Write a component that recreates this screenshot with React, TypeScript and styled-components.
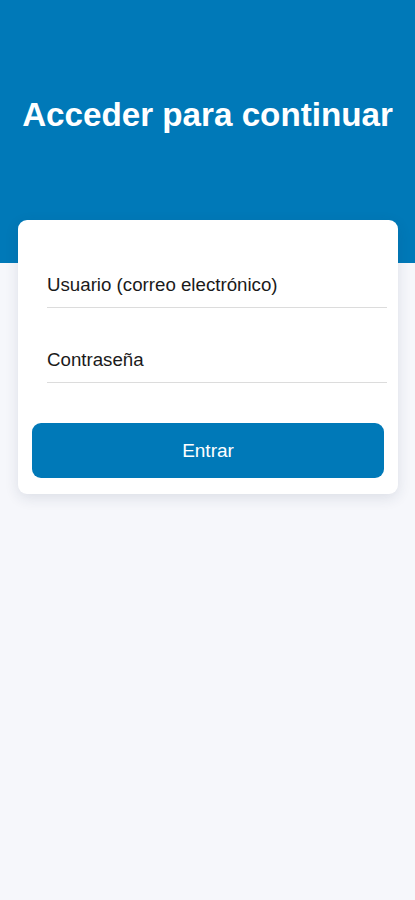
import React from "react";
import styled, { createGlobalStyle } from "styled-components";

const Global = createGlobalStyle`
  html, body { margin: 0; padding: 0; background: #f6f7fb; }
  body { font-family: "Liberation Sans", Arial, sans-serif; }
  * { box-sizing: border-box; }
`;

const Page = styled.div`
  min-height: 900px;
  background: #f6f7fb;
  display: flex;
  flex-direction: column;
`;

const Header = styled.header`
  height: 263px;
  background: #0079b8;
  display: flex;
  justify-content: center;
  padding-top: 95px;
`;

const Title = styled.h1`
  margin: 0;
  color: #ffffff;
  font-size: 33.2px;
  font-weight: 700;
  line-height: 40px;
  letter-spacing: 0;
  white-space: nowrap;
`;

const Card = styled.form`
  margin: -43px 17px 0 18px;
  background: #ffffff;
  border-radius: 9px;
  box-shadow: 0 4px 14px rgba(30, 50, 80, 0.12);
  padding: 54px 14px 16px 14px;
  display: flex;
  flex-direction: column;
`;

const Field = styled.label<{ $mb: number }>`
  display: block;
  margin: 0 -3px 0 15px;
  border-bottom: 1.5px solid #dcdcdc;
  padding: 0 0 12px 0;
  margin-bottom: ${(p) => p.$mb}px;
`;

const Input = styled.input`
  display: block;
  width: 100%;
  border: none;
  outline: none;
  background: transparent;
  font-family: "Liberation Sans", Arial, sans-serif;
  font-size: 18.7px;
  line-height: 21px;
  color: #1a1a1a;
  padding: 0;
  &::placeholder { color: #1a1a1a; opacity: 1; }
`;

const Button = styled.button`
  height: 55px;
  border: none;
  border-radius: 9px;
  background: #0079b8;
  color: #ffffff;
  font-family: "Liberation Sans", Arial, sans-serif;
  font-size: 19px;
  cursor: pointer;
`;

export default function App() {
  return (
    <>
      <Global />
      <Page>
        <Header>
          <Title>Acceder para continuar</Title>
        </Header>
        <Card onSubmit={(e) => e.preventDefault()}>
          <Field $mb={41}>
            <Input type="email" placeholder="Usuario (correo electrónico)" />
          </Field>
          <Field $mb={40}>
            <Input type="password" placeholder="Contraseña" />
          </Field>
          <Button type="submit">Entrar</Button>
        </Card>
      </Page>
    </>
  );
}
